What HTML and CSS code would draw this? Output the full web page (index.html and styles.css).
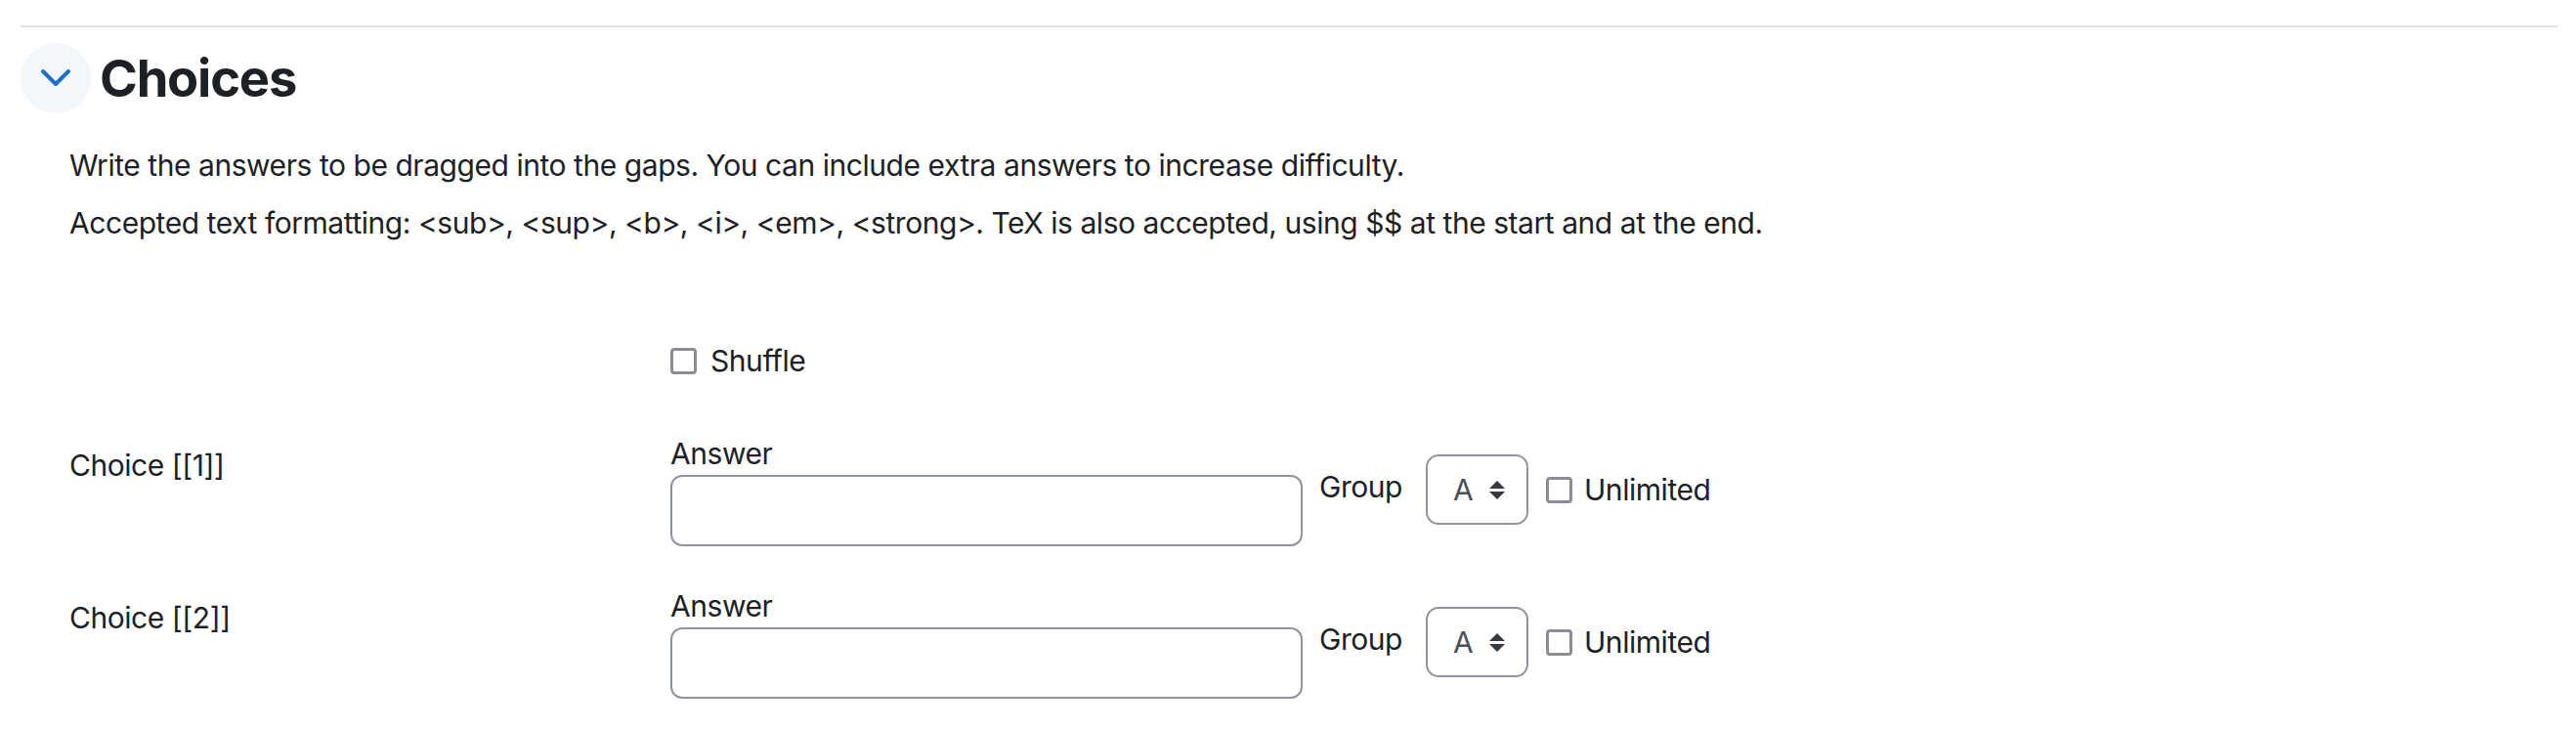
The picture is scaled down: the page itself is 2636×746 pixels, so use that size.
FILE: index.html
```html
<!DOCTYPE html>
<html lang="en">
<head>
<meta charset="utf-8">
<title>Choices</title>
<link rel="stylesheet" href="styles.css">
</head>
<body>
<div class="page">
  <hr class="divider">
  <div class="header">
    <span class="toggle">
      <svg class="chevron" width="32" height="20" viewBox="0 0 32 20" aria-hidden="true">
        <polyline points="3,3 16,16 29,3" fill="none" stroke="#1f6fc4" stroke-width="4" stroke-linecap="round" stroke-linejoin="round"/>
      </svg>
    </span>
    <h3 class="title">Choices</h3>
  </div>
  <div class="content">
    <div class="desc">
      <p class="desc-line">Write the answers to be dragged into the gaps. You can include extra answers to increase difficulty.</p>
      <p class="desc-line">Accepted text formatting: &lt;sub&gt;, &lt;sup&gt;, &lt;b&gt;, &lt;i&gt;, &lt;em&gt;, &lt;strong&gt;. TeX is also accepted, using $$ at the start and at the end.</p>
    </div>
    <div class="form-row shuffle-row">
      <div class="label-col"></div>
      <div class="field-col">
        <label class="check"><span class="box"></span><span class="check-text">Shuffle</span></label>
      </div>
    </div>
    <div class="form-row choice-row">
      <div class="label-col choice-label">Choice [[1]]</div>
      <div class="field-col fields">
        <div class="answer">
          <div class="answer-label">Answer</div>
          <div class="input"></div>
        </div>
        <div class="group-label">Group</div>
        <div class="select"><span class="select-value">A</span><svg class="arrows" width="16" height="19" viewBox="0 0 16 19" aria-hidden="true"><polygon points="8,0 16,8 0,8" fill="#343a40"/><polygon points="0,11 16,11 8,19" fill="#343a40"/></svg></div>
        <label class="check unlimited"><span class="box"></span><span class="check-text">Unlimited</span></label>
      </div>
    </div>
    <div class="form-row choice-row">
      <div class="label-col choice-label">Choice [[2]]</div>
      <div class="field-col fields">
        <div class="answer">
          <div class="answer-label">Answer</div>
          <div class="input"></div>
        </div>
        <div class="group-label">Group</div>
        <div class="select"><span class="select-value">A</span><svg class="arrows" width="16" height="19" viewBox="0 0 16 19" aria-hidden="true"><polygon points="8,0 16,8 0,8" fill="#343a40"/><polygon points="0,11 16,11 8,19" fill="#343a40"/></svg></div>
        <label class="check unlimited"><span class="box"></span><span class="check-text">Unlimited</span></label>
      </div>
    </div>
  </div>
</div>
</body>
</html>
```
FILE: styles.css
```css
html, body {
  margin: 0;
  padding: 0;
  background: #ffffff;
}
body {
  font-family: Inter, "Liberation Sans", sans-serif;
  font-size: 30px;
  line-height: 45px;
  letter-spacing: -0.45px;
  color: #1d2125;
}
.page {
  padding: 0 19px 0 21px;
  overflow: hidden;
  height: 746px;
}
.divider {
  margin: 26px 0 0 0;
  border: 0;
  border-top: 2px solid #dee2e6;
  height: 0;
}
.header {
  display: flex;
  align-items: center;
  gap: 9px;
  margin-top: 16px;
}
.toggle {
  width: 72px;
  height: 72px;
  border-radius: 50%;
  background: #f3f7fb;
  display: flex;
  align-items: center;
  justify-content: center;
  flex: none;
}
.title {
  margin: 0;
  font-size: 52.5px;
  line-height: 63px;
  font-weight: 700;
  letter-spacing: -1.2px;
  color: #1d2125;
}
.content {
  padding-left: 50px;
}
.desc {
  margin-top: 31px;
  display: flex;
  flex-direction: column;
  gap: 14px;
}
.desc-line {
  margin: 0;
}
.form-row {
  display: flex;
  align-items: flex-start;
}
.label-col {
  width: 615px;
  flex: none;
}
.shuffle-row {
  margin-top: 96px;
}
.check {
  display: flex;
  align-items: center;
  gap: 14px;
}
.box {
  width: 27px;
  height: 27px;
  box-sizing: border-box;
  border: 3.5px solid #8c8c96;
  border-radius: 4px;
  background: #fff;
  flex: none;
}
.choice-row {
  margin-top: 51px;
}
.choice-row + .choice-row {
  margin-top: 40px;
}
.choice-label {
  padding-top: 11px;
}
.fields {
  display: flex;
  align-items: flex-start;
}
.answer {
  width: 647px;
  flex: none;
}
.answer-label {
  line-height: 43px;
}
.input {
  height: 73px;
  box-sizing: border-box;
  border: 2px solid #8f959e;
  border-radius: 12px;
  background: #fff;
}
.group-label {
  margin-top: 33px;
  margin-left: 17px;
  width: 85px;
  flex: none;
}
.select {
  margin-top: 22px;
  margin-left: 24px;
  width: 105px;
  height: 72px;
  box-sizing: border-box;
  border: 2px solid #8f959e;
  border-radius: 13px;
  display: flex;
  align-items: center;
  padding-left: 26px;
  gap: 17px;
  flex: none;
}
.select-value {
  color: #495057;
}
.arrows {
  flex: none;
}
.unlimited {
  margin-top: 36px;
  margin-left: 18px;
  gap: 12px;
}
```
